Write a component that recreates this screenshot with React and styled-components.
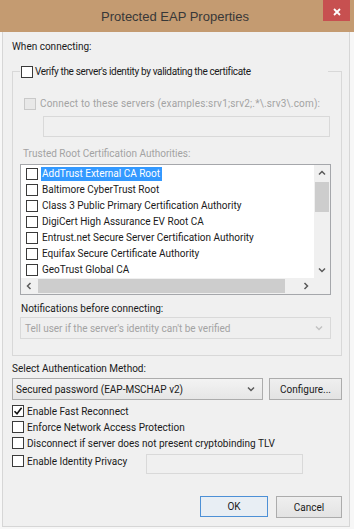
import React from 'react'
import styled, { createGlobalStyle } from 'styled-components'

const GlobalStyle = createGlobalStyle`
  html, body {
    margin: 0;
    padding: 0;
  }
  body {
    width: 354px;
    height: 529px;
    overflow: hidden;
    background: #f7f7f7;
    font-family: Roboto, "Liberation Sans", Arial, sans-serif;
    font-size: 10px;
    color: #1a1a1a;
  }
`;

const certificates = [
    'AddTrust External CA Root',
    'Baltimore CyberTrust Root',
    'Class 3 Public Primary Certification Authority',
    'DigiCert High Assurance EV Root CA',
    'Entrust.net Secure Server Certification Authority',
    'Equifax Secure Certificate Authority',
    'GeoTrust Global CA',
];

const chevronPaths = {
    up: 'M1 4.5 L4 1.5 L7 4.5',
    down: 'M1 1.5 L4 4.5 L7 1.5',
    left: 'M4.5 1 L1.5 4 L4.5 7',
    right: 'M1.5 1 L4.5 4 L1.5 7',
};

const Chevron = ({ dir = 'down', color = '#5a5a5a' }) => {
    const flat = dir === 'up' || dir === 'down';
    return (
        <svg width={flat ? 8 : 6} height={flat ? 6 : 8} viewBox={flat ? '0 0 8 6' : '0 0 6 8'}>
            <path d={chevronPaths[dir]} fill="none" stroke={color} strokeWidth="1.5" />
        </svg>
    );
};

const CheckBox = ({ checked, disabled }) => (
    <BOX $disabled={disabled}>
        {checked && (
            <svg width="10" height="10" viewBox="0 0 10 10">
                <path d="M1.5 5.2 L4 7.8 L8.6 1.8" fill="none" stroke="#111" strokeWidth="1.6" />
            </svg>
        )}
    </BOX>
);

const App = () => {
    return (
        <>
            <GlobalStyle />
            <WINDOW>
                <TITLEBAR>
                    <TITLE>Protected EAP Properties</TITLE>
                    <CLOSE>
                        <svg width="8" height="8" viewBox="0 0 8 8">
                            <path d="M1 1 L7 7 M7 1 L1 7" stroke="#fff" strokeWidth="1.8" />
                        </svg>
                    </CLOSE>
                </TITLEBAR>
                <BODY>
                    <CAPTION $top={8}>When connecting:</CAPTION>
                    <GROUP>
                        <HEADER>
                            <CHECKROW $gap={2} $height={13} $spacing={-0.35}>
                                <CheckBox />
                                Verify the server's identity by validating the certificate
                            </CHECKROW>
                        </HEADER>
                        <CHECKROW $gap={4} $height={13} $indent={4} $spacing={0.18} $disabled>
                            <CheckBox disabled />
                            Connect to these servers (examples:srv1;srv2;.*\.srv3\.com):
                        </CHECKROW>
                        <FIELD $top={6} $indent={23} />
                        <CAPTION $top={10} $indent={3} $disabled>Trusted Root Certification Authorities:</CAPTION>
                        <LISTBOX>
                            <ROWS>
                                {certificates.map((name, i) => (
                                    <LISTROW key={name}>
                                        <CheckBox />
                                        <ITEMTEXT $selected={i === 0}>{name}</ITEMTEXT>
                                    </LISTROW>
                                ))}
                            </ROWS>
                            <VSCROLL>
                                <ARROW><Chevron dir="up" /></ARROW>
                                <VTHUMB />
                                <ARROW><Chevron dir="down" /></ARROW>
                            </VSCROLL>
                            <HSCROLL>
                                <ARROW><Chevron dir="left" /></ARROW>
                                <HTHUMB />
                                <ARROW><Chevron dir="right" /></ARROW>
                            </HSCROLL>
                            <CORNER />
                        </LISTBOX>
                        <CAPTION $top={7} $indent={1}>Notifications before connecting:</CAPTION>
                        <COMBO $top={2} $disabled>
                            Tell user if the server's identity can't be verified
                            <Chevron color="#c2c2c2" />
                        </COMBO>
                    </GROUP>
                    <CAPTION $top={6}>Select Authentication Method:</CAPTION>
                    <METHODROW>
                        <COMBO $width={251}>
                            Secured password (EAP-MSCHAP v2)
                            <Chevron />
                        </COMBO>
                        <BUTTON $width={73}>Configure...</BUTTON>
                    </METHODROW>
                    <OPTIONS>
                        <CHECKROW $gap={3}>
                            <CheckBox checked />
                            Enable Fast Reconnect
                        </CHECKROW>
                        <CHECKROW $gap={3}>
                            <CheckBox />
                            Enforce Network Access Protection
                        </CHECKROW>
                        <CHECKROW $gap={3}>
                            <CheckBox />
                            Disconnect if server does not present cryptobinding TLV
                        </CHECKROW>
                        <PRIVACYROW>
                            <CHECKROW $gap={3} $width={134}>
                                <CheckBox />
                                Enable Identity Privacy
                            </CHECKROW>
                            <FIELD $top={1} $width={157} $height={20} />
                        </PRIVACYROW>
                    </OPTIONS>
                    <FOOTER>
                        <BUTTON $width={68} $primary>OK</BUTTON>
                        <BUTTON $width={66}>Cancel</BUTTON>
                    </FOOTER>
                </BODY>
            </WINDOW>
        </>
    )
}

const WINDOW = styled.div`
    width: 354px;
    height: 529px;
    display: flex;
    flex-direction: column;
`;
const TITLEBAR = styled.div`
    height: 32px;
    flex: none;
    display: grid;
    grid-template-columns: 1fr auto 1fr;
    padding-right: 4px;
    background: #c49b71;
`;
const TITLE = styled.div`
    grid-column: 2;
    align-self: center;
    font-family: "Liberation Sans", Arial, sans-serif;
    font-size: 13px;
    color: #383838;
    margin-top: 1px;
`;
const CLOSE = styled.div`
    grid-column: 3;
    justify-self: end;
    width: 27px;
    height: 21px;
    padding-top: 3px;
    box-sizing: border-box;
    display: flex;
    align-items: center;
    justify-content: center;
    background: #c75050;
`;
const BODY = styled.div`
    width: 348px;
    height: 495px;
    margin-left: 2px;
    box-sizing: border-box;
    padding: 0 7px 0 9px;
    border: 1px solid #d6d6d6;
    border-top: none;
    background: #f0f0f0;
    display: flex;
    flex-direction: column;
`;
const CAPTION = styled.div`
    line-height: 13px;
    margin: ${p => p.$top || 0}px 0 0 ${p => p.$indent || 0}px;
    color: ${p => p.$disabled ? '#a3a3a3' : '#1a1a1a'};
    white-space: nowrap;
`;
const GROUP = styled.fieldset`
    margin: 12px 0 0;
    padding: 19px 10px 16px 7px;
    border: 1px solid #d8d8d8;
    min-width: 0;
`;
const HEADER = styled.legend`
    width: 308px;
    box-sizing: border-box;
    padding: 0 0 0 1px;
`;
const CHECKROW = styled.label`
    display: flex;
    align-items: center;
    gap: ${p => p.$gap}px;
    height: ${p => p.$height || 16}px;
    line-height: 13px;
    letter-spacing: ${p => p.$spacing || 0}px;
    margin-left: ${p => p.$indent || 0}px;
    width: ${p => p.$width ? `${p.$width}px` : 'auto'};
    flex: none;
    white-space: nowrap;
    color: ${p => p.$disabled ? '#a3a3a3' : '#1a1a1a'};
`;
const BOX = styled.span`
    width: 12px;
    height: 12px;
    flex: none;
    box-sizing: border-box;
    display: flex;
    align-items: center;
    justify-content: center;
    border: 1px solid ${p => p.$disabled ? '#c9c9c9' : '#3a3a3a'};
    background: ${p => p.$disabled ? '#e8e8e8' : '#fff'};
`;
const FIELD = styled.div`
    height: ${p => p.$height || 21}px;
    width: ${p => p.$width ? `${p.$width}px` : 'auto'};
    margin: ${p => p.$top || 0}px 1px 0 ${p => p.$indent || 0}px;
    box-sizing: border-box;
    border: 1px solid #d9d9d9;
    background: #f0f0f0;
`;
const LISTBOX = styled.div`
    margin-top: 4px;
    height: 131px;
    box-sizing: border-box;
    border: 1px solid #a5a7ab;
    background: #fff;
    display: grid;
    grid-template-columns: 1fr 16px;
    grid-template-rows: 1fr 16px;
`;
const ROWS = styled.div`
    padding-top: 1px;
    overflow: hidden;
`;
const LISTROW = styled.div`
    height: 16px;
    display: flex;
    align-items: center;
    gap: 3px;
    padding-left: 5px;
    white-space: nowrap;
`;
const ITEMTEXT = styled.span`
    line-height: 12px;
    padding: 1px 2px 1px 1px;
    background: ${p => p.$selected ? '#3399ff' : 'transparent'};
    color: ${p => p.$selected ? '#fff' : '#1a1a1a'};
`;
const VSCROLL = styled.div`
    background: #f0f0f0;
    display: flex;
    flex-direction: column;
`;
const HSCROLL = styled.div`
    background: #f0f0f0;
    display: flex;
`;
const ARROW = styled.div`
    width: 16px;
    height: 16px;
    flex: none;
    display: flex;
    align-items: center;
    justify-content: center;
`;
const VTHUMB = styled.div`
    height: 30px;
    flex: none;
    margin: 1px 1px auto;
    background: #cdcdcd;
`;
const HTHUMB = styled.div`
    width: 247px;
    flex: none;
    margin: 1px auto 1px 1px;
    background: #cdcdcd;
`;
const CORNER = styled.div`
    background: #f0f0f0;
`;
const COMBO = styled.div`
    height: 22px;
    width: ${p => p.$width ? `${p.$width}px` : 'auto'};
    margin-top: ${p => p.$top || 0}px;
    box-sizing: border-box;
    padding: 0 7px 0 ${p => p.$disabled ? 4 : 3}px;
    display: flex;
    align-items: center;
    justify-content: space-between;
    white-space: nowrap;
    border: 1px solid ${p => p.$disabled ? '#d9d9d9' : '#acacac'};
    background: ${p => p.$disabled ? '#efefef' : 'linear-gradient(#f3f3f3, #e6e6e6)'};
    color: ${p => p.$disabled ? '#a3a3a3' : '#1a1a1a'};
`;
const METHODROW = styled.div`
    display: flex;
    gap: 6px;
    margin-top: 3px;
`;
const BUTTON = styled.button`
    width: ${p => p.$width}px;
    height: ${p => p.$primary ? 21 : 22}px;
    padding: 0;
    font: inherit;
    color: #1a1a1a;
    border: 1px solid ${p => p.$primary ? '#4d90d6' : '#acacac'};
    background: ${p => p.$primary ? '#e8eef4' : 'linear-gradient(#efefef, #e3e3e3)'};
`;
const OPTIONS = styled.div`
    margin-top: 3px;
    display: flex;
    flex-direction: column;
`;
const PRIVACYROW = styled.div`
    display: flex;
    align-items: flex-start;
    margin-top: 2px;
`;
const FOOTER = styled.div`
    display: flex;
    justify-content: flex-end;
    gap: 8px;
    margin-top: 22px;
`;

export default App
